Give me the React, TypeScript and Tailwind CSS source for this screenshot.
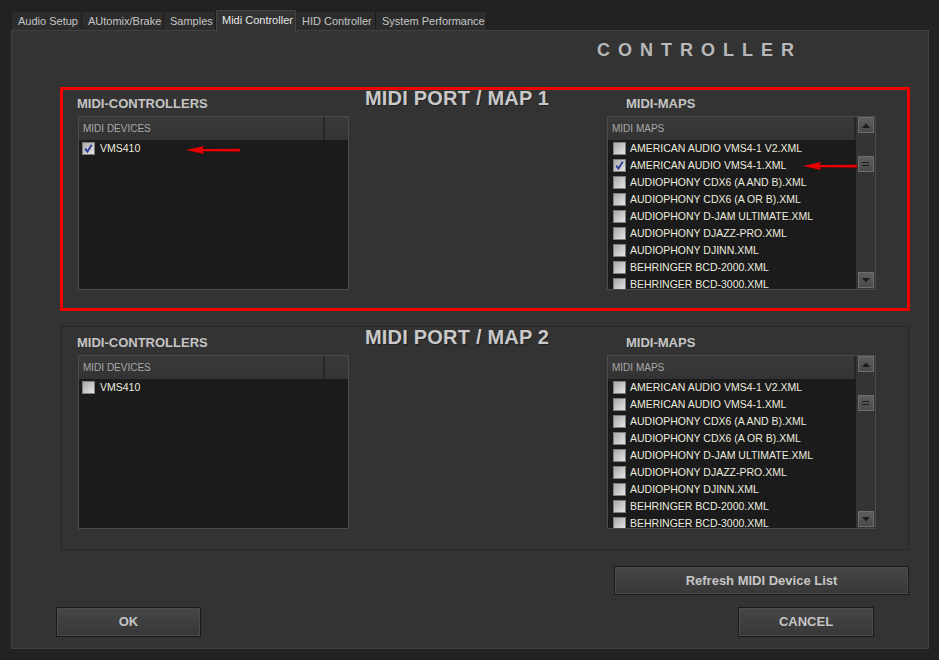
import React from 'react'

const tabs = [
  { label: 'Audio Setup', w: 'w-[70px]' },
  { label: 'AUtomix/Brake', w: 'w-[82px]' },
  { label: 'Samples', w: 'w-[52px]' },
  { label: 'Midi Controller', w: 'w-[80px]', active: true },
  { label: 'HID Controller', w: 'w-[80px]' },
  { label: 'System Performance', w: 'w-[111px]' },
]

const maps = [
  'AMERICAN AUDIO VMS4-1 V2.XML',
  'AMERICAN AUDIO VMS4-1.XML',
  'AUDIOPHONY CDX6 (A AND B).XML',
  'AUDIOPHONY CDX6 (A OR B).XML',
  'AUDIOPHONY D-JAM ULTIMATE.XML',
  'AUDIOPHONY DJAZZ-PRO.XML',
  'AUDIOPHONY DJINN.XML',
  'BEHRINGER BCD-2000.XML',
  'BEHRINGER BCD-3000.XML',
]

function CheckBox({ checked }: { checked?: boolean }) {
  return (
    <span className="flex h-[13px] w-[13px] shrink-0 items-center justify-center border border-[#7e7e7e] bg-linear-to-br from-[#a8a8a8] to-[#e6e6e6]">
      {checked && (
        <svg width="11" height="11" viewBox="0 0 11 11">
          <path d="M2.2 5.6 L4.4 8.6 L8.8 1.8" fill="none" stroke="#2b3d98" strokeWidth="1.9" />
        </svg>
      )}
    </span>
  )
}

// red annotation arrow drawn over the lists
function Arrow({ className }: { className: string }) {
  return (
    <svg className={className} width="56" height="11" viewBox="0 0 56 11">
      <polygon points="1,6 19,2 17.5,5 55,4.8 55,7.8 17.5,7.2 19,10" fill="#3a0000" opacity="0.45" />
      <polygon points="0,5 18,1 16.5,4 54,3.8 54,6.6 16.5,6.2 18,9" fill="#e80000" />
    </svg>
  )
}

function ScrollBtn({ kind }: { kind: 'up' | 'down' | 'thumb' }) {
  return (
    <div className="flex h-[16px] w-[16px] items-center justify-center border border-[#6e6e6e] bg-linear-to-b from-[#5e5e5e] to-[#4a4a4a]">
      {kind === 'up' && (
        <svg width="8" height="5" viewBox="0 0 8 5"><path d="M0 5 L4 0.5 L8 5Z" fill="#1c1c1c" /></svg>
      )}
      {kind === 'down' && (
        <svg width="8" height="5" viewBox="0 0 8 5"><path d="M0 0 L4 4.5 L8 0Z" fill="#1c1c1c" /></svg>
      )}
      {kind === 'thumb' && (
        <svg width="7" height="4" viewBox="0 0 7 4">
          <rect x="0" y="0" width="7" height="1" fill="#1c1c1c" />
          <rect x="0" y="3" width="7" height="1" fill="#1c1c1c" />
        </svg>
      )}
    </div>
  )
}

function DeviceList({ checked }: { checked?: boolean }) {
  return (
    <div className="relative h-[174px] w-[271px] border border-[#4b4b4b] bg-[#1b1b1b]">
      <div className="flex h-[23px] bg-linear-to-b from-[#3a3a3a] to-[#333333]">
        <div className="flex w-[244px] items-center pl-[4px] text-[10px] text-[#a8a8a8]">MIDI DEVICES</div>
        <div className="w-[2px] bg-[#262626]" />
        <div className="flex-1" />
      </div>
      <div className="flex h-[17px] items-center pl-[3px]">
        <CheckBox checked={checked} />
        <span className="ml-[5px] text-[10.5px] text-[#ecebdf]">VMS410</span>
      </div>
      {checked && <Arrow className="absolute left-[107px] top-[28px] z-10" />}
    </div>
  )
}

function MapList({ checkedIndex }: { checkedIndex?: number }) {
  return (
    <div className="relative flex h-[174px] w-[269px] border border-[#4b4b4b] bg-[#1b1b1b]">
      <div className="w-[248px] overflow-hidden">
        <div className="flex h-[23px] items-center border-r-2 border-[#262626] bg-linear-to-b from-[#3a3a3a] to-[#333333] pl-[4px] text-[10px] text-[#a8a8a8]">
          MIDI MAPS
        </div>
        {maps.map((m, i) => (
          <div key={m} className="flex h-[17px] items-center pl-[5px]">
            <CheckBox checked={i === checkedIndex} />
            <span className="ml-[4px] whitespace-nowrap text-[10.5px] text-[#ecebdf]">{m}</span>
          </div>
        ))}
      </div>
      <div className="flex flex-1 flex-col items-center bg-[#343434] pb-[1px]">
        <ScrollBtn kind="up" />
        <div className="mt-[23px]"><ScrollBtn kind="thumb" /></div>
        <div className="mt-auto"><ScrollBtn kind="down" /></div>
      </div>
      {checkedIndex !== undefined && <Arrow className="absolute left-[195px] top-[44px] z-10" />}
    </div>
  )
}

function PortGroup({ n, red, checked }: { n: number; red?: boolean; checked?: boolean }) {
  const box = red
    ? 'ml-[48px] mr-[18px] mt-[27px] border-[3px] border-[#f20000]'
    : 'ml-[49px] mr-[19px] mt-[15px] border border-[#262626] pl-[1px] pr-[2px] py-[2px]'
  return (
    <div className={`flex h-[224px] ${box}`}>
      <div className="flex flex-col pl-[15px] pt-[6px]">
        <div className="-ml-px h-[16px] text-[13px] font-bold leading-[16px] text-[#c4c4c4]">MIDI-CONTROLLERS</div>
        <div className="mt-[4px]"><DeviceList checked={checked} /></div>
      </div>
      <div className="pl-[16px] text-[20px] font-bold leading-[16px] tracking-[0.2px] text-[#c9c9c9] [text-shadow:1px_1px_0_#222]">
        MIDI PORT / MAP {n}
      </div>
      <div className={`ml-auto flex flex-col pt-[6px] ${red ? 'mr-[31px]' : 'mr-[30px]'}`}>
        <div className="h-[16px] pl-[19px] text-[13px] font-bold leading-[16px] text-[#c4c4c4]">MIDI-MAPS</div>
        <div className="mt-[4px]"><MapList checkedIndex={checked ? 1 : undefined} /></div>
      </div>
    </div>
  )
}

function Btn({ children, className }: { children: React.ReactNode; className: string }) {
  return (
    <button className={`flex items-center justify-center border border-[#1a1a1a] bg-linear-to-b from-[#464646] to-[#383838] text-[13px] font-bold text-[#c6c6c6] shadow-[inset_0_0_0_1px_#4c4c4c] ${className}`}>
      {children}
    </button>
  )
}

export default function App() {
  return (
    <div className="h-[660px] w-[939px] overflow-hidden bg-[#222222] font-[family-name:Liberation_Sans,Arial,sans-serif]">
      <div className="flex h-[30px] items-end pl-[12px]">
        {tabs.map(t => (
          <div
            key={t.label}
            className={
              t.active
                ? `relative z-10 -mb-px flex h-[21px] items-center border-x border-t border-[#444] bg-[#333333] pb-[2px] pl-[5px] text-[11px] text-[#e6e6e6] ${t.w}`
                : `flex h-[18px] items-center border-r border-[#1c1c1c] bg-[#2c2c2c] pl-[6px] text-[11px] text-[#c6c6c6] ${t.w}`
            }
          >
            <span className="whitespace-nowrap">{t.label}</span>
          </div>
        ))}
      </div>
      <div className="ml-[11px] flex h-[619px] w-[918px] flex-col border border-[#404040] bg-[#333333]">
        <div className="pl-[585px] pt-[9px] text-[18px] font-bold leading-[20px] tracking-[8px] text-[#b8b8b8]">CONTROLLER</div>
        <PortGroup n={1} red checked />
        <PortGroup n={2} />
        <div className="mt-[16px] flex justify-end pr-[19px]">
          <Btn className="h-[29px] w-[295px]">Refresh MIDI Device List</Btn>
        </div>
        <div className="mt-[12px] flex pl-[44px] pr-[54px]">
          <Btn className="h-[30px] w-[145px]">OK</Btn>
          <Btn className="ml-auto h-[30px] w-[136px]">CANCEL</Btn>
        </div>
      </div>
    </div>
  )
}
